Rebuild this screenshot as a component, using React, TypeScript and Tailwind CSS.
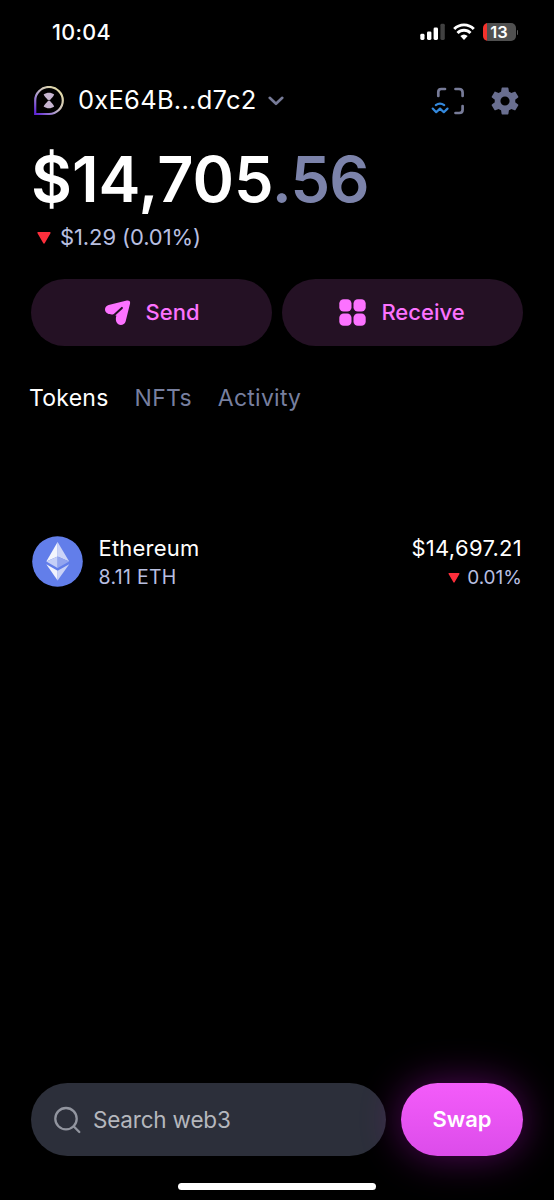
import React from "react";

function SignalIcon() {
  return (
    <svg width="26" height="18" viewBox="0 0 26 18">
      <rect x="0.3" y="10.8" width="4.2" height="6.2" rx="1.4" fill="#fff" />
      <rect x="7" y="8.4" width="4.4" height="8.6" rx="1.4" fill="#fff" />
      <rect x="13.6" y="4.6" width="4.4" height="12.4" rx="1.4" fill="#fff" />
      <rect x="20.4" y="0.8" width="4.4" height="16.2" rx="1.4" fill="#414141" />
    </svg>
  );
}

function WifiIcon() {
  return (
    <svg width="22" height="18" viewBox="0 0 22 18" fill="none" stroke="#fff" strokeWidth="2.9">
      <path d="M1.2 6 C6.6 0.5 15.4 0.5 20.8 6" />
      <path d="M4.5 10 C8.2 6.3 13.8 6.3 17.5 10" />
      <path d="M7.3 13 C9.6 11 12.4 11 14.7 13 L11 16.9 Z" fill="#fff" stroke="none" />
    </svg>
  );
}

function Battery() {
  return (
    <div className="flex items-center">
      <div className="flex h-[18px] w-[33px] items-center justify-center overflow-hidden rounded-[5px] bg-[linear-gradient(90deg,#f4322c_0_4px,#505050_4px)]">
        <span className="text-[16.5px] leading-[18px] font-semibold">13</span>
      </div>
      <div className="ml-[1px] h-[5px] w-[1.5px] rounded-r-full bg-[#5a5a5a]" />
    </div>
  );
}

function AvatarIcon() {
  return (
    <svg width="30" height="30" viewBox="0 0 30 30" fill="none">
      <defs>
        <linearGradient id="ring" x1="2" y1="27" x2="25" y2="5" gradientUnits="userSpaceOnUse">
          <stop offset="0" stopColor="#6228d8" />
          <stop offset="0.4" stopColor="#a995cf" />
          <stop offset="0.65" stopColor="#cfc5bd" />
          <stop offset="1" stopColor="#e0d8a8" />
        </linearGradient>
      </defs>
      <path d="M1.2 28 V14.5 A13.8 13.5 0 1 1 15 28 Z" stroke="url(#ring)" strokeWidth="2.2" />
      <path d="M9.6 8.6 C13 6.2 17 6.2 20.2 8.6 C19.2 11.4 17 12.6 15.8 14.4 C17 16.4 19.2 18 20.2 20.4 C17 22.8 13 22.8 9.6 20.4 C10.8 18 13 16.4 14.2 14.4 C13 12.6 10.8 11.4 9.6 8.6 Z" fill="#c6b5d0" />
      <path d="M13.3 14.4h3.4" stroke="#000" strokeWidth="0.7" />
    </svg>
  );
}

function ScanIcon() {
  return (
    <svg width="34" height="28" viewBox="0 0 34 28" fill="none" strokeLinecap="round" strokeLinejoin="round">
      <g stroke="#777b98" strokeWidth="2.7">
        <path d="M7.3 9 V5 Q7.3 2 10.3 2 H14" />
        <path d="M24.5 2 H28 Q31.6 2 31.6 5.4 V9" />
        <path d="M31.6 19 V22.8 Q31.6 26 28.2 26 H24.5" />
      </g>
      <g stroke="#3489dd" strokeWidth="2.2">
        <path d="M4.8 18.2 Q9 15 13.2 18.2" />
        <path d="M1.7 21.6 L5.2 25.2 L9 21.6 L12.8 25.2 L16.5 21.6" />
      </g>
    </svg>
  );
}

function GearIcon() {
  return (
    <svg width="28" height="28" viewBox="2.2 2 19.6 20" preserveAspectRatio="none">
      <path
        fill="#696e8f"
        d="M19.14 12.94c.04-.3.06-.61.06-.94 0-.32-.02-.64-.07-.94l2.03-1.58c.18-.14.23-.41.12-.61l-1.92-3.32c-.12-.22-.37-.29-.59-.22l-2.39.96c-.5-.38-1.03-.7-1.62-.94l-.36-2.54c-.04-.24-.24-.41-.48-.41h-3.84c-.24 0-.43.17-.47.41l-.36 2.54c-.59.24-1.13.57-1.62.94l-2.39-.96c-.22-.08-.47 0-.59.22L2.74 8.87c-.12.21-.08.47.12.61l2.03 1.58c-.05.3-.09.63-.09.94s.02.64.07.94l-2.03 1.58c-.18.14-.23.41-.12.61l1.92 3.32c.12.22.37.29.59.22l2.39-.96c.5.38 1.03.7 1.62.94l.36 2.54c.05.24.24.41.48.41h3.84c.24 0 .44-.17.47-.41l.36-2.54c.59-.24 1.13-.56 1.62-.94l2.39.96c.22.08.47 0 .59-.22l1.92-3.32c.12-.22.07-.47-.12-.61l-2.01-1.58zM12 15.2c-1.77 0-3.2-1.43-3.2-3.2s1.43-3.2 3.2-3.2 3.2 1.43 3.2 3.2-1.43 3.2-3.2 3.2z"
      />
    </svg>
  );
}

function SendIcon() {
  return (
    <svg width="26" height="26" viewBox="0 0 26 26">
      <path
        fill="#fc72ff"
        d="M21.8 0.6 C24.2 0.1 25.5 1.4 25 3.8 L20.7 21.2 C19.4 25.8 13.4 26.4 11.4 22 C10.6 20 10.7 17.6 11.4 15.8 L8.6 14.4 C6.6 14.6 4.4 14.6 2.7 13.6 C-1.4 11.4 -0.6 6 3.6 5 Z"
      />
      <path d="M16.9 7.9 L8.4 15.8" stroke="#241124" strokeWidth="2" strokeLinecap="round" />
    </svg>
  );
}

function GridIcon() {
  return (
    <svg width="27" height="27" viewBox="0 0 27 27" fill="#fc72ff">
      <rect x="0.3" y="0.3" width="12.2" height="12.2" rx="4.3" />
      <rect x="14.5" y="0.3" width="12.2" height="12.2" rx="4.3" />
      <rect x="0.3" y="14.5" width="12.2" height="12.2" rx="4.3" />
      <rect x="14.5" y="14.5" width="12.2" height="12.2" rx="4.3" />
    </svg>
  );
}

function EthereumIcon() {
  return (
    <svg width="51" height="51" viewBox="0 0 51 51">
      <circle cx="25.5" cy="25.5" r="25.3" fill="#627eea" />
      <path d="M25.6 6 L14.3 25.6 L25.6 20.6 Z" fill="#f3f5fd" />
      <path d="M25.6 6 L37.2 25.6 L25.6 20.6 Z" fill="#ccd4f7" />
      <path d="M14.3 25.6 L25.6 20.6 V32 Z" fill="#c5cff7" />
      <path d="M37.2 25.6 L25.6 20.6 V32 Z" fill="#93a5ef" />
      <path d="M14.3 28.3 L25.6 34.8 V44.6 Z" fill="#f0f2fd" />
      <path d="M37.2 28.3 L25.6 34.8 V44.6 Z" fill="#c9d2f7" />
    </svg>
  );
}

function Down({ className }: { className: string }) {
  return (
    <svg className={className} viewBox="0 0 14 12">
      <path d="M1.2 0.8 H12.8 L7 10.8 Z" fill="#fd2f3c" stroke="#fd2f3c" strokeWidth="1.6" strokeLinejoin="round" />
    </svg>
  );
}

export default function App() {
  return (
    <div className="flex h-[1200px] w-[554px] flex-col overflow-hidden bg-black font-['Inter',sans-serif] whitespace-nowrap text-white">
      <header className="flex h-[64px] items-center pr-[36px] pl-[52px]">
        <span className="text-[21.5px] font-medium tracking-[0.3px]">10:04</span>
        <div className="ml-auto flex items-center">
          <SignalIcon />
          <div className="mr-[8px] ml-[7px] flex">
            <WifiIcon />
          </div>
          <Battery />
        </div>
      </header>

      <div className="flex h-[73px] items-center pr-[35px] pl-[34px]">
        <AvatarIcon />
        <span className="ml-[14px] text-[25.5px] tracking-[0.26px]">0xE64B...d7c2</span>
        <svg className="ml-[11px]" width="16" height="10" viewBox="0 0 16 10" fill="none">
          <path d="M1.7 1.8 L8 7.8 L14.3 1.8" stroke="#777b98" strokeWidth="2.6" strokeLinecap="round" strokeLinejoin="round" />
        </svg>
        <div className="ml-auto flex items-center gap-[26px]">
          <ScanIcon />
          <GearIcon />
        </div>
      </div>

      <div className="flex h-[84px] items-center pl-[31px] text-[63px] font-semibold">
        <span>$14,705</span>
        <span className="-ml-[2px] tracking-[-0.8px] text-[#7c83aa]">.56</span>
      </div>
      <div className="flex h-[33px] items-center pl-[37px] text-[22px] text-[#b8bfe0]">
        <Down className="mr-[9px] h-[12px] w-[14px]" />
        <span className="tracking-[-0.1px]">$1.29 (0.01%)</span>
      </div>

      <div className="mt-[25px] flex h-[67px] gap-[10px] px-[31px] text-[22px] font-medium text-[#fc72ff]">
        <button className="flex flex-1 items-center justify-center gap-[15px] rounded-full bg-[#241124] pl-[1px]">
          <SendIcon />
          <span>Send</span>
        </button>
        <button className="flex flex-1 items-center justify-center gap-[15px] rounded-full bg-[#241124] pr-[1px]">
          <GridIcon />
          <span>Receive</span>
        </button>
      </div>

      <nav className="flex h-[105px] items-center gap-[26px] pl-[29px] text-[23px] tracking-[0.25px] text-[#777f9f]">
        <span className="text-white">Tokens</span>
        <span>NFTs</span>
        <span>Activity</span>
      </nav>

      <div className="mt-[84px] flex h-[53px] items-center pr-[32px] pl-[31.5px]">
        <EthereumIcon />
        <div className="mt-[2px] ml-[16px] flex flex-col">
          <span className="text-[22px] leading-[29px] tracking-[0.2px]">Ethereum</span>
          <span className="text-[19.5px] leading-[29px] tracking-[0.3px] text-[#b8bfe0]">8.11 ETH</span>
        </div>
        <div className="mt-[3px] ml-auto flex flex-col items-end">
          <span className="text-[22px] leading-[29px] tracking-[0.3px]">$14,697.21</span>
          <span className="flex items-center text-[19px] leading-[30px] text-[#b8bfe0]">
            <Down className="mr-[7px] h-[10px] w-[12px]" />
            0.01%
          </span>
        </div>
      </div>

      <div className="mt-auto flex h-[73px] gap-[15px] pr-[31px] pl-[31px]">
        <div className="flex flex-1 items-center rounded-full bg-[#2c2f3a] pl-[22px]">
          <svg width="28" height="28" viewBox="0 0 28 28" fill="none" stroke="#92959f" strokeWidth="2.3" strokeLinecap="round">
            <circle cx="13" cy="12.7" r="10.7" />
            <path d="M20.6 20.3 L26.3 26" />
          </svg>
          <span className="ml-[12px] text-[22.5px] tracking-[-0.2px] text-[#b5b7bd]">Search web3</span>
        </div>
        <button className="h-[73px] w-[122px] rounded-full bg-linear-to-b from-[#f45cfa] to-[#dc4cea] text-[22px] font-semibold shadow-[0_0_40px_rgba(200,20,220,0.42)]">
          Swap
        </button>
      </div>
      <div className="mt-[27px] mb-[10px] ml-[178px] h-[7px] w-[198px] shrink-0 rounded-full bg-white" />
    </div>
  );
}
